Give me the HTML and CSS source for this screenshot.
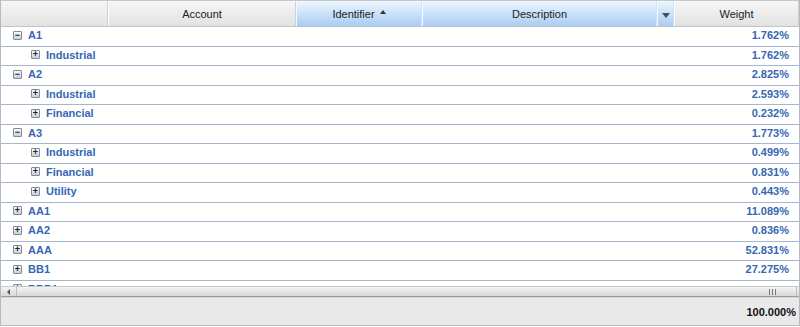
FILE: index.html
```html
<!DOCTYPE html>
<html lang="en">
<head>
  <meta charset="UTF-8" />
  <title>Weights</title>
  <link rel="stylesheet" href="styles.css">
</head>
<body>

<div class="grid">
  <div class="grid-head">
    <div class="hd"></div>
    <div class="hd">Account</div>
    <div class="hd sorted">Identifier <span class="sort-arrow"></span></div>
    <div class="hd sorted">Description</div>
    <div class="hd sorted trigger"><span class="down-arrow"></span></div>
    <div class="hd">Weight</div>
  </div>

  <div class="grid-body" id="rows"></div>

  <div class="hscroll">
    <div class="hs-btn"><span class="left-arrow"></span></div>
    <div class="hs-thumb">
      <svg class="grip" width="7" height="6" viewBox="0 0 7 6">
        <path d="M0.5 0v6M3.5 0v6M6.5 0v6" stroke="#777" stroke-width="1"/>
      </svg>
    </div>
  </div>

  <div class="grid-foot">100.000%</div>
</div>

<script>
  const rows = [
    { name: "A1", level: 0, open: true, weight: "1.762%" },
    { name: "Industrial", level: 1, weight: "1.762%" },
    { name: "A2", level: 0, open: true, weight: "2.825%" },
    { name: "Industrial", level: 1, weight: "2.593%" },
    { name: "Financial", level: 1, weight: "0.232%" },
    { name: "A3", level: 0, open: true, weight: "1.773%" },
    { name: "Industrial", level: 1, weight: "0.499%" },
    { name: "Financial", level: 1, weight: "0.831%" },
    { name: "Utility", level: 1, weight: "0.443%" },
    { name: "AA1", level: 0, weight: "11.089%" },
    { name: "AA2", level: 0, weight: "0.836%" },
    { name: "AAA", level: 0, weight: "52.831%" },
    { name: "BB1", level: 0, weight: "27.275%" },
    { name: "BBB1", level: 0, weight: "" }
  ];

  const body = document.getElementById('rows');
  rows.forEach(r => {
    const div = document.createElement('div');
    div.className = 'row lvl' + r.level;
    div.innerHTML = `
      <span class="toggle">${r.open ? '&minus;' : '+'}</span>
      <span class="label">${r.name}</span>
      <span class="weight">${r.weight}</span>
    `;
    body.appendChild(div);
  });
</script>

</body>
</html>
```

FILE: styles.css
```css
body {
  margin: 0;
  font-family: 'Liberation Sans', Arial, sans-serif;
  font-size: 11px;
  background: #fff;
}
.grid {
  width: 800px;
  height: 326px;
  display: flex;
  flex-direction: column;
  border-left: 1px solid #b5b8c8;
  border-right: 1px solid #b5b8c8;
  border-bottom: 1px solid #b5b8c8;
  box-sizing: border-box;
}
.grid-head {
  display: grid;
  grid-template-columns: 107px 188px 126px 235px 17px 125px;
  height: 27px;
  flex: none;
  border-top: 1px solid #c8c8c8;
  border-bottom: 1px solid #c4c4c4;
  box-sizing: border-box;
  background: linear-gradient(#f6f6f6, #e2e2e2);
}
.hd {
  display: flex;
  align-items: center;
  justify-content: center;
  color: #222;
  border-left: 1px solid #fff;
  border-right: 1px solid #d0d0d0;
}
.hd:first-child {
  border-left: none;
}
.hd.sorted {
  background: linear-gradient(#eef6fe, #a9cdf3);
  border-left-color: #f4f9ff;
  border-right-color: #cfe2f8;
}
.sort-arrow {
  display: inline-block;
  width: 0;
  height: 0;
  margin: 0 0 3px 5px;
  border-left: 3px solid transparent;
  border-right: 3px solid transparent;
  border-bottom: 4px solid #333;
}
.down-arrow {
  display: inline-block;
  width: 0;
  height: 0;
  margin-top: 3px;
  border-left: 4px solid transparent;
  border-right: 4px solid transparent;
  border-top: 5px solid #3d4e63;
}
.grid-body {
  height: 259px;
  flex: none;
  overflow: hidden;
}
.row {
  display: flex;
  align-items: center;
  height: 19.5px;
  padding-bottom: 2px;
  border-bottom: 1px solid #a6b6cc;
  box-sizing: border-box;
  color: #3567b4;
  font-weight: bold;
}
.row.lvl0 {
  padding-left: 12px;
}
.row.lvl1 {
  padding-left: 30px;
}
.toggle {
  width: 7px;
  height: 7px;
  border: 1px solid #7f8a9a;
  border-radius: 1px;
  background: linear-gradient(#fafafa, #c9ced6);
  color: #222;
  font-size: 9px;
  line-height: 7px;
  text-align: center;
  font-weight: bold;
  margin-right: 6px;
}
.label {
  flex: 1;
}
.weight {
  padding-right: 10px;
}
.hscroll {
  display: flex;
  height: 11px;
  flex: none;
  box-sizing: border-box;
  border-top: 1px solid #c9c9c9;
  border-bottom: 1px solid #9c9c9c;
  background: linear-gradient(#f4f4f4, #d8d8d8);
}
.hs-btn {
  width: 15px;
  display: flex;
  align-items: center;
  justify-content: center;
  border-right: 1px solid #bdbdbd;
}
.left-arrow {
  width: 0;
  height: 0;
  border-top: 3px solid transparent;
  border-bottom: 3px solid transparent;
  border-right: 3px solid #555;
}
.hs-thumb {
  flex: 1;
  margin-right: 2px;
  display: flex;
  align-items: center;
  justify-content: flex-end;
  padding-right: 20px;
  border-right: 1px solid #bdbdbd;
}
.grid-foot {
  height: 28px;
  flex: none;
  box-sizing: border-box;
  background: #e9e9e9;
  border-top: 1px solid #d6d6d6;
  display: flex;
  align-items: center;
  justify-content: flex-end;
  padding-right: 3px;
  font-weight: bold;
  color: #111;
}
```
